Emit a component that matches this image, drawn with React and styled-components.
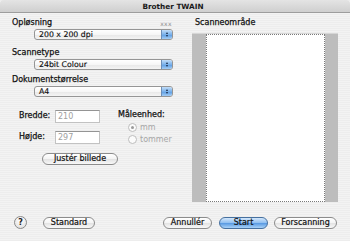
import React from "react";
import styled, { createGlobalStyle } from "styled-components";

const Global = createGlobalStyle`
  html, body { margin: 0; padding: 0; }
  body { width: 350px; height: 241px; overflow: hidden; font-family: "DejaVu Sans", Verdana, sans-serif; }
`;

const Window = styled.div`
  width: 350px;
  height: 241px;
  display: flex;
  flex-direction: column;
  background: repeating-linear-gradient(to bottom, #ededed 0 1px, #f3f3f3 1px 2px);
  overflow: hidden;
`;

const TitleBar = styled.div`
  height: 12px;
  flex: none;
  border-bottom: 1px solid #9d9d9d;
  background: linear-gradient(to bottom, #e4e4e4, #cfcfcf);
  display: flex;
  align-items: center;
  justify-content: center;
  font-size: 7.3px;
  font-weight: bold;
  color: #1a1a1a;
  border-radius: 4px 4px 0 0;
  padding-right: 4px;
`;

const Body = styled.div`
  flex: 1;
  display: flex;
`;

const LeftCol = styled.div`
  width: 161px;
  padding-left: 12px;
  display: flex;
  flex-direction: column;
  flex: none;
`;

const RightCol = styled.div`
  flex: 1;
  display: flex;
  flex-direction: column;
  padding-left: 19px;
`;

const LabelRow = styled.div`
  display: flex;
  justify-content: space-between;
  align-items: center;
  height: 10px;
  margin-top: ${(p) => p.$top}px;
`;

const Label = styled.span`
  font-size: 8px;
  line-height: 10px;
  color: #111;
  white-space: nowrap;
  -webkit-text-stroke: 0.25px #111;
`;

const Dim = styled.span`
  font-size: 6px;
  color: #8a8a8a;
  letter-spacing: 0.4px;
  margin-right: 1px;
`;

const Popup = styled.div`
  margin-left: 22px;
  margin-top: ${(p) => p.$top}px;
  width: 139px;
  height: 11px;
  box-sizing: border-box;
  border: 1px solid #959595;
  border-radius: 3px;
  background: linear-gradient(to bottom, #ffffff, #f6f6f6 50%, #e8e8e8 55%, #f4f4f4);
  display: flex;
  align-items: center;
  justify-content: space-between;
  overflow: hidden;
`;

const PopupText = styled.span`
  font-size: 7.8px;
  color: #111;
  padding-left: 4px;
  line-height: 9px;
  -webkit-text-stroke: 0.15px #111;
`;

const Stepper = styled.div`
  width: 10px;
  height: 100%;
  background: linear-gradient(to bottom, #c2ddf8, #7ab1ea 50%, #5f9fe4 55%, #a4cdf5);
  border-left: 1px solid #6d8fb8;
  display: flex;
  flex-direction: column;
  align-items: center;
  justify-content: center;
  gap: 1px;
`;

const Tri = styled.span`
  width: 0;
  height: 0;
  border-left: 1.5px solid transparent;
  border-right: 1.5px solid transparent;
  ${(p) => (p.$up ? "border-bottom: 2px solid #1a2a44;" : "border-top: 2px solid #1a2a44;")}
`;

const SizeGrid = styled.div`
  margin-top: 12px;
  display: flex;
`;

const Fields = styled.div`
  margin-left: 7px;
  display: grid;
  grid-template-columns: 36px 45px;
  row-gap: 7px;
  align-items: center;
`;

const Field = styled.div`
  width: 45px;
  height: 13px;
  box-sizing: border-box;
  border: 1px solid #c2c2c2;
  border-top-color: #949494;
  background: #fff;
  font-size: 8px;
  color: #a0a0a0;
  padding-left: 2px;
  line-height: 11px;
`;

const Units = styled.div`
  margin-left: 18px;
  display: flex;
  flex-direction: column;
  padding-top: 1px;
`;

const RadioRow = styled.div`
  display: flex;
  align-items: center;
  gap: 3px;
  margin-left: 10px;
  height: 9px;
  margin-top: ${(p) => p.$top}px;
  font-size: 8px;
  color: #a6a6a6;
`;

const Radio = styled.span`
  width: 7px;
  height: 7px;
  border-radius: 50%;
  border: 1px solid #bdbdbd;
  background: #fbfbfb;
  display: flex;
  align-items: center;
  justify-content: center;
  &::after {
    content: "";
    width: 3px;
    height: 3px;
    border-radius: 50%;
    background: ${(p) => (p.$on ? "#9a9a9a" : "transparent")};
  }
`;

const PushButton = styled.button`
  height: 12px;
  box-sizing: border-box;
  padding: 0;
  width: ${(p) => p.$w}px;
  border-radius: 6px;
  border: 1px solid ${(p) => (p.$primary ? "#46709f" : "#8c8c8c")};
  background: ${(p) =>
    p.$primary
      ? "linear-gradient(to bottom, #d3e7fb, #8dbdf0 50%, #5c9ce3 55%, #a9d2f8)"
      : "linear-gradient(to bottom, #ffffff, #f3f3f3 50%, #e4e4e4 55%, #f8f8f8)"};
  font-family: "DejaVu Sans", Verdana, sans-serif;
  font-size: 8px;
  color: #111;
  -webkit-text-stroke: 0.2px #111;
  white-space: nowrap;
  display: flex;
  align-items: center;
  justify-content: center;
  line-height: 1;
  flex: none;
`;

const AdjustRow = styled.div`
  margin-top: 9px;
  margin-left: 30px;
  display: flex;
`;

const AreaTitle = styled(Label)`
  margin-top: 5px;
  margin-left: 3px;
  display: block;
  height: 10px;
`;

const Bed = styled.div`
  margin-top: 5px;
  width: 146px;
  height: 169px;
  box-sizing: border-box;
  background: #bdbdbd;
  border-top: 1px solid #d6d6d6;
  display: flex;
  justify-content: center;
  padding-left: 1px;
`;

const Paper = styled.div`
  width: 119px;
  height: 100%;
  box-sizing: border-box;
  background: #fff;
  border: 1px dotted #7a7a7a;
`;

const Footer = styled.div`
  height: 24px;
  flex: none;
  display: flex;
  align-items: flex-start;
  padding-left: 14px;
  padding-right: 13px;
`;

const Help = styled.span`
  width: 13px;
  height: 13px;
  box-sizing: border-box;
  border-radius: 50%;
  border: 1px solid #8a8a8a;
  background: radial-gradient(circle at 50% 30%, #ffffff, #dcdcdc);
  font-size: 8px;
  font-weight: bold;
  color: #222;
  display: flex;
  align-items: center;
  justify-content: center;
  margin-top: -1px;
  flex: none;
`;

const Spacer = styled.div`
  flex: 1;
`;

const Gap = styled.div`
  width: ${(p) => p.$w}px;
  flex: none;
`;

function PopupMenu({ top, children }) {
  return (
    <Popup $top={top}>
      <PopupText>{children}</PopupText>
      <Stepper>
        <Tri $up />
        <Tri />
      </Stepper>
    </Popup>
  );
}

export default function App() {
  return (
    <>
      <Global />
      <Window>
        <TitleBar>Brother TWAIN</TitleBar>
        <Body>
          <LeftCol>
            <LabelRow $top={5}>
              <Label>Opløsning</Label>
              <Dim>xxx</Dim>
            </LabelRow>
            <PopupMenu top={1}>200 x 200 dpi</PopupMenu>
            <LabelRow $top={8}>
              <Label>Scannetype</Label>
            </LabelRow>
            <PopupMenu top={1}>24bit Colour</PopupMenu>
            <LabelRow $top={5}>
              <Label>Dokumentstørrelse</Label>
            </LabelRow>
            <PopupMenu top={1}>A4</PopupMenu>
            <SizeGrid>
              <Fields>
                <Label>Bredde:</Label>
                <Field>210</Field>
                <Label>Højde:</Label>
                <Field>297</Field>
              </Fields>
              <Units>
                <Label>Måleenhed:</Label>
                <RadioRow $top={3}>
                  <Radio $on />
                  mm
                </RadioRow>
                <RadioRow $top={3}>
                  <Radio />
                  tommer
                </RadioRow>
              </Units>
            </SizeGrid>
            <AdjustRow>
              <PushButton $w={76}>Justér billede</PushButton>
            </AdjustRow>
          </LeftCol>
          <RightCol>
            <AreaTitle>Scanneområde</AreaTitle>
            <Bed>
              <Paper />
            </Bed>
          </RightCol>
        </Body>
        <Footer>
          <Help>?</Help>
          <Gap $w={16} />
          <PushButton $w={52}>Standard</PushButton>
          <Spacer />
          <PushButton $w={49}>Annullér</PushButton>
          <Gap $w={7} />
          <PushButton $w={49} $primary>Start</PushButton>
          <Gap $w={6} />
          <PushButton $w={63}>Forscanning</PushButton>
        </Footer>
      </Window>
    </>
  );
}
